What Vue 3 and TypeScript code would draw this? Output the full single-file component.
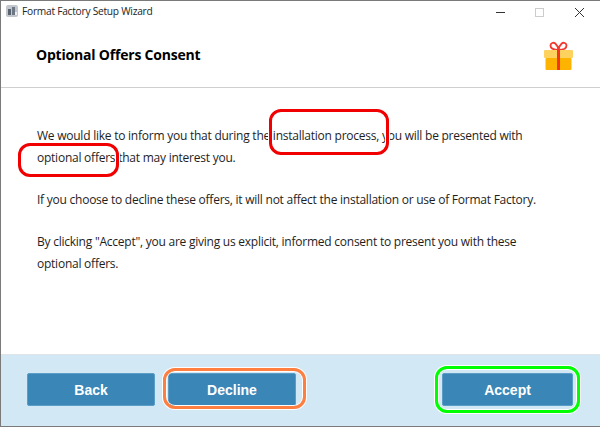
<script setup lang="ts">
const paragraphs = [
  'We would like to inform you that during the installation process, you will be presented with optional offers that may interest you.',
  'If you choose to decline these offers, it will not affect the installation or use of Format Factory.',
  'By clicking "Accept", you are giving us explicit, informed consent to present you with these optional offers.',
]
</script>

<template>
  <div class="window">
    <div class="titlebar">
      <svg class="app-icon" width="14" height="14" viewBox="0 0 14 14">
        <rect x="1" y="1" width="12" height="12" rx="2" fill="#c3c7cd" />
        <rect x="3" y="5" width="3" height="6" fill="#59636f" />
        <rect x="7" y="3" width="3" height="8" fill="#6d7783" />
        <rect x="10" y="8" width="2" height="3" fill="#eceef1" />
      </svg>
      <span class="title">Format Factory Setup Wizard</span>
      <div class="controls">
        <svg width="40" height="20" viewBox="0 0 40 20"><path d="M16 11.500h9" stroke="#333" stroke-width="1" /></svg>
        <svg width="40" height="20" viewBox="0 0 40 20"><rect x="15.500" y="7.500" width="8" height="8" fill="none" stroke="#ccc" stroke-width="1" /></svg>
        <svg width="40" height="20" viewBox="0 0 40 20"><path d="M15 7l9 9M24 7l-9 9" stroke="#333" stroke-width="1" /></svg>
      </div>
    </div>

    <header class="header">
      <h1>Optional Offers Consent</h1>
      <svg class="gift" width="30" height="30" viewBox="0 0 30 30">
        <path d="M14.500 9C10 9 6.500 7.500 6.500 4.500C6.500 2 9.500 1 11.300 2.500C13 4 14 6 14.500 9C15 6 16 4 17.700 2.500C19.500 1 22.500 2 22.500 4.500C22.500 7.500 19 9 14.500 9Z" fill="none" stroke="#f23a30" stroke-width="1.800" />
        <rect x="0" y="9" width="29" height="8" rx="1" fill="#fdd25f" />
        <rect x="1.500" y="17" width="26" height="12" rx="1" fill="#fdb300" />
        <rect x="13" y="9" width="3" height="20" fill="#f5331f" />
      </svg>
    </header>

    <main class="content">
      <p v-for="text in paragraphs" :key="text">{{ text }}</p>
    </main>

    <footer class="footer">
      <button type="button">Back</button>
      <button type="button">Decline</button>
      <button type="button" class="accept">Accept</button>
    </footer>

    <!-- hand-drawn annotations on top of the screenshot -->
    <div class="mark red mark-install"></div>
    <div class="mark red mark-offers"></div>
    <div class="mark orange"></div>
    <div class="mark green"></div>
  </div>
</template>

<style scoped>
.window {
  position: relative;
  width: 600px;
  height: 427px;
  box-sizing: border-box;
  display: flex;
  flex-direction: column;
  background: #fff;
  border: 1px solid #7a7a7a;
  border-right: none;
  font-family: "Open Sans", "Noto Sans", sans-serif;
  overflow: hidden;
}

.titlebar {
  height: 20px;
  padding-left: 4px;
  flex: none;
  display: flex;
  align-items: center;
  gap: 3px;
}

.title {
  font-size: 10.200px;
  letter-spacing: -0.250px;
  color: #222;
}

.controls {
  margin-left: auto;
  display: flex;
}

.header {
  height: 66px;
  flex: none;
  display: flex;
  align-items: center;
  justify-content: space-between;
  padding: 0 26px 0 35px;
  border-bottom: 1px solid #cfcfcf;
}

h1 {
  margin: 0;
  font-size: 14px;
  font-weight: 700;
  letter-spacing: -0.200px;
  color: #000;
}

.gift {
  margin-top: 3px;
}

.content {
  flex: 1;
  padding: 37px 55px 0 36px;
}

p {
  margin: 0 0 20px;
  font-size: 12px;
  letter-spacing: -0.240px;
  line-height: 22px;
  color: #1e1e1e;
}

.footer {
  height: 72px;
  flex: none;
  box-sizing: border-box;
  display: flex;
  gap: 13px;
  padding: 18px 27px 0 26px;
  background: #d3e8f5;
  border-top: 1px solid #e0e4e6;
}

button {
  width: 128px;
  height: 33px;
  padding: 0;
  border: 1px solid #5b9dc6;
  border-radius: 2px;
  background: #3a87b7;
  color: #fff;
  font-family: "Liberation Sans", Arial, sans-serif;
  font-size: 14px;
  font-weight: 700;
}

.accept {
  width: 131px;
  margin-left: auto;
}

.mark {
  position: absolute;
  box-sizing: border-box;
  border-radius: 12px;
  box-shadow: inset 0 0 0 1px #fff, 0 0 0 1px #fff;
}

.red {
  border: 3px solid #f00000;
}

.mark-install {
  left: 268px;
  top: 108px;
  width: 120px;
  height: 46px;
}

.mark-offers {
  left: 17px;
  top: 142px;
  width: 101px;
  height: 34px;
}

.orange {
  left: 162px;
  top: 367px;
  width: 143px;
  height: 41px;
  border: 3px solid #ff7f41;
}

.green {
  left: 434px;
  top: 365px;
  width: 145px;
  height: 47px;
  border: 3px solid #00ff00;
}
</style>

<style>
html, body {
  margin: 0;
  background: #fff;
}
</style>
